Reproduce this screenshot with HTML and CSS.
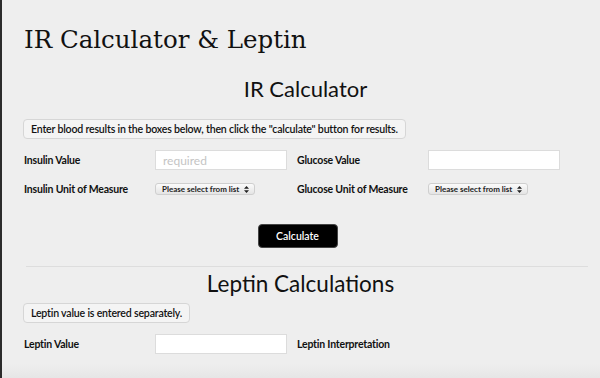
FILE: index.html
```html
<!DOCTYPE html>
<html>
<head>
<meta charset="utf-8">
<title>IR Calculator &amp; Leptin</title>
<link rel="stylesheet" href="styles.css">
</head>
<body>
<div class="page">
  <h1 class="site-title">IR Calculator &amp; Leptin</h1>
  <section class="calc">
    <h2 class="section-title">IR Calculator</h2>
    <div class="note">Enter blood results in the boxes below, then click the "calculate" button for results.</div>
    <div class="form-grid">
      <label class="lbl">Insulin Value</label>
      <input class="field" type="text" placeholder="required">
      <label class="lbl">Glucose Value</label>
      <input class="field" type="text">
      <label class="lbl">Insulin Unit of Measure</label>
      <div class="select"><span class="opt">Please select from list</span><svg class="arrows" width="5" height="7" viewBox="0 0 5 7"><path d="M2.5 0L5 2.8H0Z M2.5 7L5 4.2H0Z" fill="#222"/></svg></div>
      <label class="lbl">Glucose Unit of Measure</label>
      <div class="select"><span class="opt">Please select from list</span><svg class="arrows" width="5" height="7" viewBox="0 0 5 7"><path d="M2.5 0L5 2.8H0Z M2.5 7L5 4.2H0Z" fill="#222"/></svg></div>
    </div>
    <div class="actions"><button class="btn">Calculate</button></div>
  </section>
  <hr class="divider">
  <section class="calc">
    <h2 class="section-title leptin">Leptin Calculations</h2>
    <div class="note">Leptin value is entered separately.</div>
    <div class="form-grid">
      <label class="lbl">Leptin Value</label>
      <input class="field" type="text">
      <label class="lbl">Leptin Interpretation</label>
      <span></span>
    </div>
  </section>
</div>
</body>
</html>
```
FILE: styles.css
```css
html {
  background: linear-gradient(to bottom, #eeeeee 0, #eeeeee 364px, #e6e6e6 378px);
  min-height: 100%;
}
body {
  margin: 0;
  border-left: 2px solid #2b2b2b;
  min-height: 378px;
  box-sizing: border-box;
  font-family: "Lato", "Liberation Sans", sans-serif;
  color: #111;
}
.page {
  padding: 24px 12px 0 21px;
}
.site-title {
  font-family: "DejaVu Serif", "Liberation Serif", serif;
  font-weight: normal;
  font-size: 24.5px;
  line-height: 32px;
  margin: 0 0 20px 1px;
  color: #111;
}
.section-title {
  font-family: "Lato", sans-serif;
  font-weight: normal;
  font-size: 22px;
  line-height: 26px;
  text-align: center;
  margin: 0 0 15px 0;
}
.note {
  display: inline-block;
  background: #f4f4f4;
  border: 1px solid #d6d6d6;
  border-radius: 4px;
  font-size: 10.6px;
  letter-spacing: -0.2px;
  font-weight: 600;
  line-height: 18px;
  padding: 0 7px;
}
.form-grid {
  display: grid;
  grid-template-columns: 131px 142px 131px 132px;
  align-items: center;
  row-gap: 12px;
  margin-top: 11px;
  padding-left: 1px;
}
.lbl {
  font-size: 10.5px;
  letter-spacing: -0.2px;
  font-weight: 700;
  line-height: 14px;
}
.field {
  width: 132px;
  height: 20px;
  box-sizing: border-box;
  border: 1px solid #dcdcdc;
  background: #fff;
  font-family: inherit;
  font-size: 12px;
  padding: 0 7px;
  margin: 0;
}
.field::placeholder { color: #c4c4c4; }
.select {
  width: 100px;
  height: 12px;
  box-sizing: border-box;
  border: 1px solid #cfcfcf;
  border-radius: 3px;
  background: linear-gradient(#fbfbfb, #e4e4e4);
  display: flex;
  justify-content: space-between;
  align-items: center;
  padding: 0 5px 0 6px;
  color: #222;
}
.opt {
  font-size: 8px;
  font-weight: 700;
  line-height: 10px;
  white-space: nowrap;
}
.actions {
  display: flex;
  justify-content: center;
  margin-top: 28px;
  padding-right: 16px;
}
.btn {
  background: #000;
  color: #fff;
  border: 1px solid #444;
  border-radius: 4px;
  width: 80px;
  height: 24px;
  font-family: inherit;
  font-size: 10.5px;
  font-weight: 600;
}
.divider {
  border: 0;
  border-top: 1px solid #dddddd;
  margin: 18px 0 4px 3px;
}
.leptin {
  font-size: 22.5px;
  margin-bottom: 4px;
  padding-right: 10px;
}
```
